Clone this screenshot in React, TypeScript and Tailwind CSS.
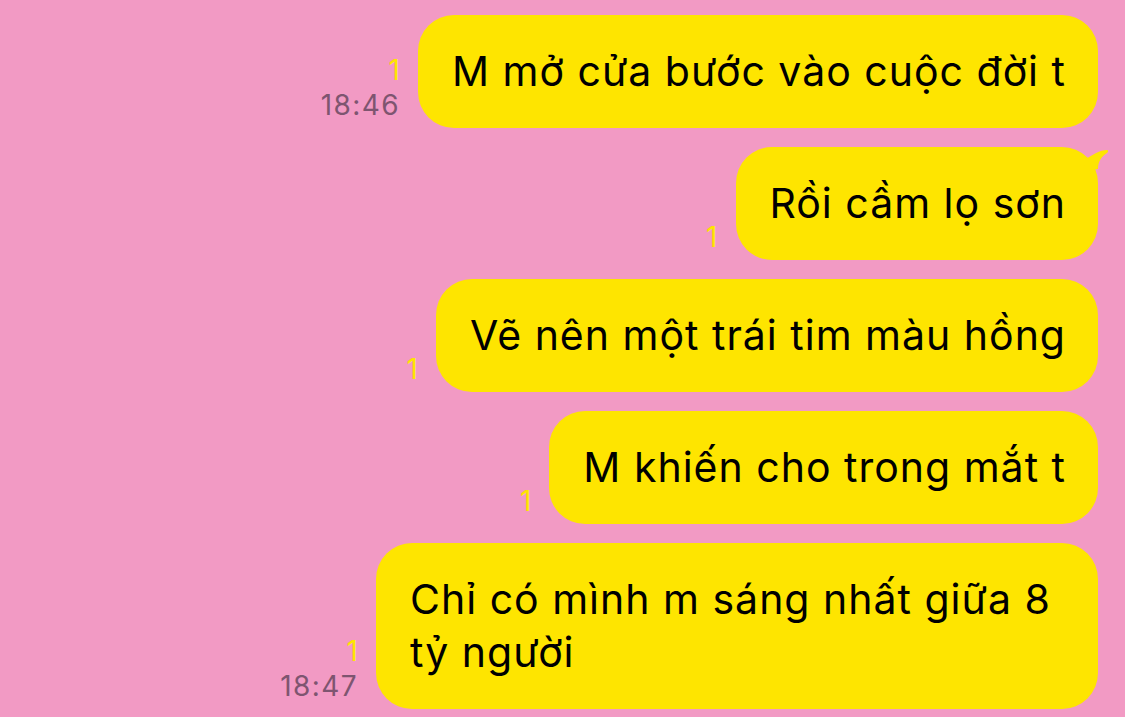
import React from "react";

type Msg = { text: string; time?: string; tail?: boolean };

const msgs: Msg[] = [
  { text: "M mở cửa bước vào cuộc đời t", time: "18:46" },
  { text: "Rồi cầm lọ sơn", tail: true },
  { text: "Vẽ nên một trái tim màu hồng" },
  { text: "M khiến cho trong mắt t" },
  { text: "Chỉ có mình m sáng nhất giữa 8 tỷ người", time: "18:47" },
];

function Tail() {
  return (
    <svg
      className="absolute -right-[12px] top-0"
      width="32"
      height="30"
      viewBox="0 0 32 30"
    >
      <path
        d="M8 12 C14 8 22 3 29 3 C30.5 3 30.5 5 29 6 C24 9 20 14 20 22 L6 24 Z"
        fill="#FEE500"
      />
    </svg>
  );
}

export default function App() {
  return (
    <div
      className="w-[1125px] h-[717px] overflow-hidden bg-[#F29AC4] flex flex-col items-end gap-[19px] pt-[15px] pr-[27px]"
      style={{ fontFamily: "Inter, 'Noto Sans', sans-serif" }}
    >
      {msgs.map((m, i) => (
        <div key={i} className="flex items-end gap-[18px]">
          <div className="flex flex-col items-end pb-[9px]">
            <span className="text-[28px] leading-[28px] text-[#FEE500]">1</span>
            {m.time && (
              <span className="text-[28px] leading-[28px] tracking-[1.4px] text-[#7E5570] mt-[7px]">
                {m.time}
              </span>
            )}
          </div>
          <div className="relative">
            <div className="max-w-[722px] rounded-[36px] bg-[#FEE500] pl-[34px] pr-[32px] py-[30px] text-[41px] leading-[53px] tracking-[1px] text-black">
              {m.text}
            </div>
            {m.tail && <Tail />}
          </div>
        </div>
      ))}
    </div>
  );
}
